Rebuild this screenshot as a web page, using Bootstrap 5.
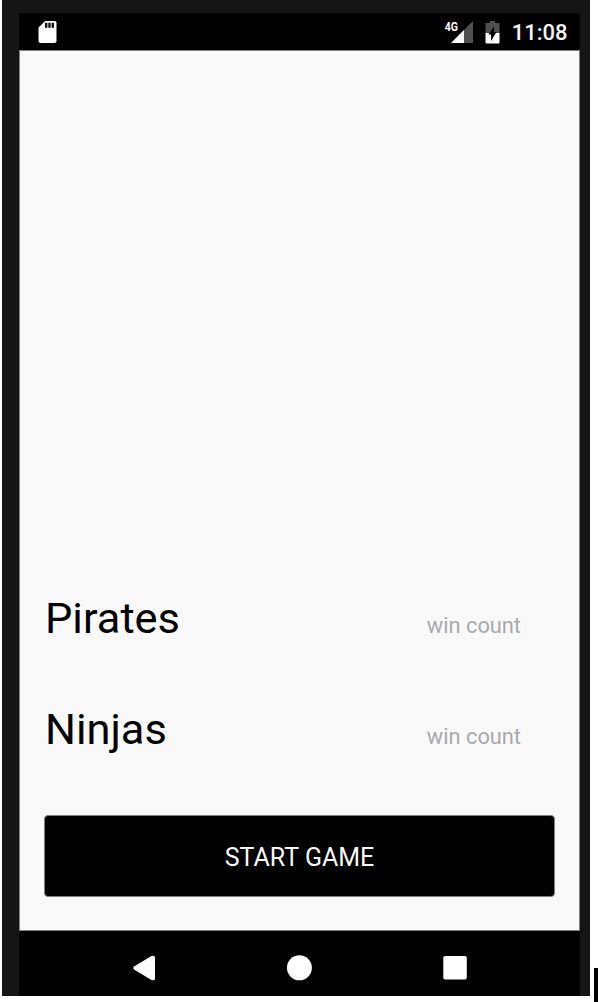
<!DOCTYPE html>
<html lang="en">
<head>
<meta charset="utf-8">
<meta name="viewport" content="width=device-width, initial-scale=1">
<title>Pirates and Ninjas</title>
<link rel="stylesheet" href="https://cdn.jsdelivr.net/npm/bootstrap@5.3.0/dist/css/bootstrap.min.css">
<style>
body { font-family: Roboto, "Noto Sans", sans-serif; width: 598px; height: 1002px; }
.device { width: 588px; height: 996px; margin-left: 2px; padding: 13px 10px 0 17px; background: #151515; }
.screen { background: #000; border-radius: 3px 3px 0 0; }
.status-bar { height: 37px; padding: 5px 12.5px 0 19px; }
.status-bar svg { flex-shrink: 0; }
.clock { font-size: 22px; line-height: 24px; font-weight: 500; margin: 3px 0 0 12px; color: #f4f4f4; }
.game { background: #f9f9f9; border: 1px solid #7d8080; width: 561px; height: 881px; padding: 0 24px 33px; }
.team { height: 50px; padding: 0 34px 0 1px; }
.team + .team { margin-top: 61px; }
.team-name { font-size: 43.4px; line-height: 50px; color: #000; }
.wins { font-size: 21.8px; line-height: 30px; color: #a9a9ae; margin-bottom: 3px; }
.btn-start { height: 82px; margin-top: 60px; padding: 9px 12px 6px; border: 1px solid #7d8080; border-radius: 4px; background: #000; color: #f7f7f7; font-size: 25px; line-height: 30px; }
.btn-start:hover { background: #111; color: #fff; }
.nav-keys { height: 65px; padding: 8px 112px 0 111px; }
.side-strip { width: 4px; height: 34px; margin-left: 4px; background: #000; }
</style>
</head>
<body class="d-flex align-items-start overflow-hidden bg-white">
<main class="device flex-shrink-0">
  <div class="screen h-100 d-flex flex-column">
    <header class="status-bar d-flex align-items-start flex-shrink-0">
      <svg width="19" height="25" viewBox="0 -3 19 25" class="me-auto" aria-hidden="true">
        <path d="M7.2 0H16.5Q18.5 0 18.5 2V20Q18.5 22 16.5 22H2.5Q.5 22 .5 20V6.5Z" fill="#fff"/>
        <path d="M8.2 1.8V6.8M11.5 1.8V6.8M14.8 1.8V6.8" stroke="#111" stroke-width="2.4"/>
      </svg>
      <svg width="32" height="26" viewBox="-2 -3 32 26" aria-label="4G signal">
        <path d="M30 0V22H8Z" fill="#505050"/>
        <path d="M0 0H15.5V11L9 17H0Z" fill="#000"/>
        <path d="M21 9V22H8Z" fill="#fff"/>
        <text x="1.8" y="9.8" font-size="12.5" font-weight="700" fill="#fff" textLength="13.2" lengthAdjust="spacingAndGlyphs">4G</text>
      </svg>
      <svg width="15" height="26" viewBox="0 -3 15 26" style="margin-left:12px" aria-hidden="true">
        <path d="M5 0H10V2H14.5V12H.5V2H5Z" fill="#505050"/>
        <path d="M.5 12H14.5V21.5Q14.5 22.5 13.5 22.5H1.5Q.5 22.5 .5 21.5Z" fill="#fff"/>
        <path d="M9 5.5V11H11.5L6 20V13.5H3.3Z" fill="#000"/>
      </svg>
      <span class="clock">11:08</span>
    </header>
    <section class="game d-flex flex-column justify-content-end flex-shrink-0">
      <div class="team d-flex justify-content-between align-items-end">
        <span class="team-name">Pirates</span><span class="wins">win count</span>
      </div>
      <div class="team d-flex justify-content-between align-items-end">
        <span class="team-name">Ninjas</span><span class="wins">win count</span>
      </div>
      <button type="button" class="btn btn-start w-auto flex-shrink-0">START GAME</button>
    </section>
    <nav class="nav-keys d-flex align-items-center justify-content-between" aria-label="System navigation">
      <svg width="26" height="26" viewBox="0 0 26 26"><path d="M4.4 11.2 21.9 .8Q25 .1 25 2.5V23.5Q25 25.9 21.9 25.2L4.4 14.8Q2.2 13 4.4 11.2Z" fill="#fff"/></svg>
      <svg width="26" height="26" viewBox="0 0 26 26"><circle cx="13.4" cy="12.8" r="12.5" fill="#fff"/></svg>
      <svg width="26" height="26" viewBox="0 0 26 26"><rect x="1.3" y="1" width="23.5" height="23.5" rx="1.8" fill="#fff"/></svg>
    </nav>
  </div>
</main>
<div class="side-strip align-self-end flex-shrink-0"></div>
<script src="https://cdn.jsdelivr.net/npm/bootstrap@5.3.0/dist/js/bootstrap.bundle.min.js"></script>
</body>
</html>
